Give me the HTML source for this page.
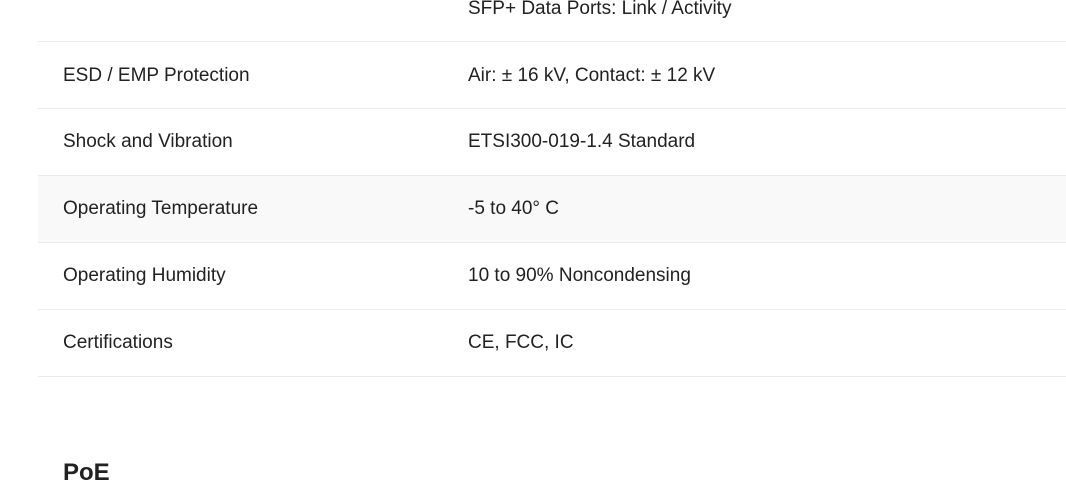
<!DOCTYPE html>
<html><head><style>
body{margin:0;width:1066px;height:481px;overflow:hidden;background:#fff;font-family:"Liberation Sans",Arial,sans-serif;color:#222;position:relative}
.t{position:absolute;font-size:19px;line-height:20px;white-space:nowrap}
.l{position:absolute;left:38px;width:1028px;height:1px;background:#ebebeb}
.bg{position:absolute;left:38px;width:1028px;top:176px;height:66px;background:#f9f9f9}
</style></head><body>
<div class="bg"></div>
<div class="t" style="left:468px;top:-1px">SFP+ Data Ports: Link / Activity</div>
<div class="l" style="top:41px"></div>
<div class="t" style="left:63px;top:66px">ESD / EMP Protection</div>
<div class="t" style="left:468px;top:66px">Air: ± 16 kV, Contact: ± 12 kV</div>
<div class="l" style="top:108px"></div>
<div class="t" style="left:63px;top:132px">Shock and Vibration</div>
<div class="t" style="left:468px;top:132px">ETSI300-019-1.4 Standard</div>
<div class="l" style="top:175px"></div>
<div class="t" style="left:63px;top:199px">Operating Temperature</div>
<div class="t" style="left:468px;top:199px">-5 to 40° C</div>
<div class="l" style="top:242px"></div>
<div class="t" style="left:63px;top:266px">Operating Humidity</div>
<div class="t" style="left:468px;top:266px">10 to 90% Noncondensing</div>
<div class="l" style="top:309px"></div>
<div class="t" style="left:63px;top:333px">Certifications</div>
<div class="t" style="left:468px;top:333px">CE, FCC, IC</div>
<div class="l" style="top:376px"></div>
<div class="t" style="left:63px;top:459px;font-size:24px;line-height:28px;font-weight:bold">PoE</div>
</body></html>
